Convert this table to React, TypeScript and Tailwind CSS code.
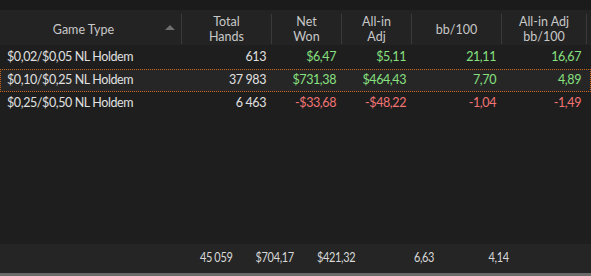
const COLS = 'grid grid-cols-[182px_90px_70px_70px_90px_85px_1fr]'

type Row = { game: string; hands: string; net: string; adj: string; bb: string; adjbb: string; win: boolean; selected?: boolean }

const ROWS: Row[] = [
  { game: '$0,02/$0,05 NL Holdem', hands: '613', net: '$6,47', adj: '$5,11', bb: '21,11', adjbb: '16,67', win: true },
  { game: '$0,10/$0,25 NL Holdem', hands: '37 983', net: '$731,38', adj: '$464,43', bb: '7,70', adjbb: '4,89', win: true, selected: true },
  { game: '$0,25/$0,50 NL Holdem', hands: '6 463', net: '-$33,68', adj: '-$48,22', bb: '-1,04', adjbb: '-1,49', win: false },
]

function HeaderCell({ lines, sort }: { lines: string[]; sort?: boolean }) {
  return (
    <div className="relative flex flex-col items-center justify-center text-center border-r border-[#3a3a3a] my-[4px]">
      {lines.map(l => (
        <span key={l} className={`block h-[15px] leading-[15px] ${sort ? 'pr-[14px]' : ''}`}>{l}</span>
      ))}
      {sort && (
        <span className="absolute right-[6px] top-[11px] w-0 h-0 border-l-[5px] border-r-[5px] border-b-[5px] border-l-transparent border-r-transparent border-b-[#6e6e6e]" />
      )}
    </div>
  )
}

export default function App() {
  return (
    <div className="w-[591px] h-[276px] bg-[#1e1e1e] flex flex-col text-[12.5px] text-[#e0e0e0] overflow-hidden" style={{ fontFamily: 'Lato, "Noto Sans", sans-serif' }}>
      <div className="h-[10px] bg-[#1b1b1b]" />

      {/* Header */}
      <div className={`${COLS} h-[35px] bg-[#232323] text-[#c8c8c8]`}>
        <HeaderCell sort lines={['Game Type']} />
        <HeaderCell lines={['Total', 'Hands']} />
        <HeaderCell lines={['Net', 'Won']} />
        <HeaderCell lines={['All-in', 'Adj']} />
        <HeaderCell lines={['bb/100']} />
        <HeaderCell lines={['All-in Adj', 'bb/100']} />
        <div />
      </div>

      {/* Rows */}
      <div className="flex-1 pt-[1px] tracking-[-0.4px]">
        {ROWS.map(r => {
          const c = r.win ? 'text-[#88e080]' : 'text-[#f27474]'
          return (
            <div
              key={r.game}
              className={`${COLS} h-[23px] items-center ${r.selected ? 'bg-[#262626] border border-dotted border-[#c8641e]' : 'border border-transparent'}`}
            >
              <div className="pl-[6px]">{r.game}</div>
              <div className="text-right pr-[7px]">{r.hands}</div>
              <div className={`text-right pr-[7px] ${c}`}>{r.net}</div>
              <div className={`text-right pr-[7px] ${c}`}>{r.adj}</div>
              <div className={`text-right pr-[7px] ${c}`}>{r.bb}</div>
              <div className={`text-right pr-[7px] ${c}`}>{r.adjbb}</div>
              <div />
            </div>
          )
        })}
      </div>

      {/* Totals */}
      <div className="h-[29px] bg-[#252525] overflow-hidden tracking-[-0.4px]">
        <div className={`${COLS} h-full items-center origin-left scale-x-[0.877] text-[#d8d8d8]`}>
          <div />
          <div className="text-right pr-[7px]">45 059</div>
          <div className="text-right pr-[7px]">$704,17</div>
          <div className="text-right pr-[7px]">$421,32</div>
          <div className="text-right pr-[7px]">6,63</div>
          <div className="text-right pr-[7px]">4,14</div>
          <div />
        </div>
      </div>
      <div className="h-[3px] bg-[#6a6a6a]" />
    </div>
  )
}
